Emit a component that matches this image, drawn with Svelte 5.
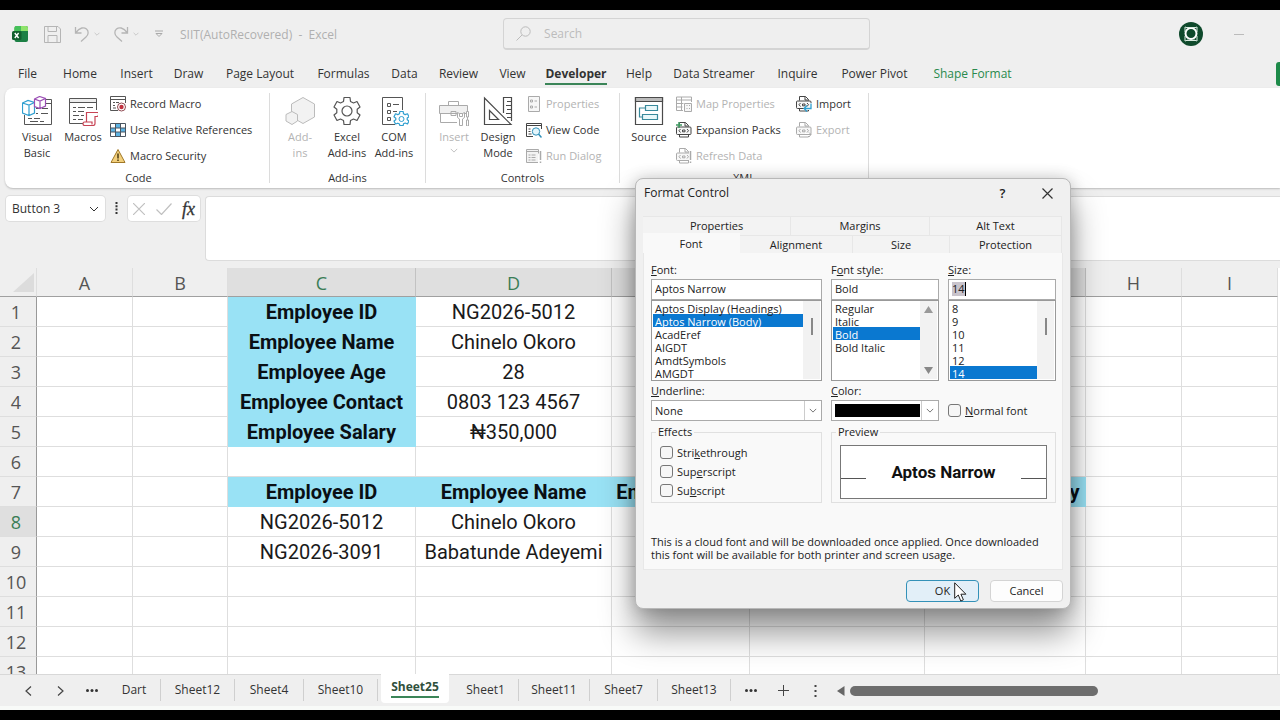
<script>
  const menus = ['File', 'Home', 'Insert', 'Draw', 'Page Layout', 'Formulas', 'Data', 'Review', 'View', 'Developer', 'Help', 'Data Streamer', 'Inquire', 'Power Pivot', 'Shape Format'];
  const columns = ['A', 'B', 'C', 'D', 'E', 'F', 'G', 'H', 'I'];
  const picked = ['C', 'D', 'E', 'F', 'G'];
  const cells = {
    C1: 'Employee ID', D1: 'NG2026-5012',
    C2: 'Employee Name', D2: 'Chinelo Okoro',
    C3: 'Employee Age', D3: '28',
    C4: 'Employee Contact', D4: '0803 123 4567',
    C5: 'Employee Salary', D5: '₦350,000',
    C7: 'Employee ID', D7: 'Employee Name', E7: 'Employee Age', F7: 'Employee Contact', G7: 'Employee Salary',
    C8: 'NG2026-5012', D8: 'Chinelo Okoro',
    C9: 'NG2026-3091', D9: 'Babatunde Adeyemi'
  };
  const rows = Array.from({ length: 13 }, (_, i) => i + 1);
  const sheets = ['Dart', 'Sheet12', 'Sheet4', 'Sheet10', 'Sheet25', 'Sheet1', 'Sheet11', 'Sheet7', 'Sheet13'];
  const fonts = ['Aptos Display (Headings)', 'Aptos Narrow (Body)', 'AcadEref', 'AIGDT', 'AmdtSymbols', 'AMGDT'];
  const styles = ['Regular', 'Italic', 'Bold', 'Bold Italic'];
  const sizes = ['8', '9', '10', '11', '12', '14'];
  let font = $state('Aptos Narrow (Body)');
  let style = $state('Bold');
  let size = $state('14');

  function isHead(col, row) {
    return (col === 'C' && row <= 5) || (row === 7 && picked.includes(col));
  }
</script>

{#snippet icon(name)}
  {#if name === 'vb'}
    <svg class="big" viewBox="0 0 30 30" fill="none" stroke="#555">
      <path d="M24 3.500H29.500V28.500H2.500V19M24 7.500H29M14 12.500h4m2 0h6M14 17.500h2m3 0h7M6 22.500h4m2 0h6M8 25.500h8m2 0h4" />
      <path stroke="#2f9fd0" stroke-width="1.200" fill="#fff" d="M.5 7 6 4.500 12.500 6.500V17L7 19.500.5 17ZM.5 7 7 9l5.500-2.500M7 9v10" />
      <path stroke="#9b4fb5" stroke-width="1.200" fill="#fff" d="m12.500 3 5-2.500 6 2V10l-5.500 2.500-5.500-2ZM12.500 3 18 5l5.500-2.500M18 5v7" />
    </svg>
  {:else if name === 'macros'}
    <svg class="big" viewBox="0 0 30 30" fill="none" stroke="#555">
      <path fill="#eee" d="M1.500 2.500h27v4h-27Z" /><path d="M28.500 6v8M1.500 6v21.500H15M5 11.500h3m2 0h7m2 0h6M5 15.500h3m2 0h6M5 19.500h6m2 0h3M5 23.500h3m2 0h5" />
      <path stroke="#c74354" fill="#fff" stroke-width="1.200" d="M18.500 16.500h11c2 0 1 4-.500 4H27v7c0 2-1 2-2 2h-8.500c-2 0-2-3.500 0-3.500h2ZM16.500 26H24v2.500" />
    </svg>
  {:else if name === 'addins'}
    <svg class="big" viewBox="0 0 30 30" fill="#f2f2f2" stroke="#bbb">
      <path d="M18 1.500 29.500 8v13L18 27.500 6.500 21V8Z" /><path d="m7 15.500 5.500 3V25L7 28.500 1 25v-6.500Z" />
    </svg>
  {:else if name === 'excel'}
    <svg class="big" viewBox="0 0 30 30" fill="none" stroke="#555" stroke-width="1.200" stroke-linejoin="round">
      <path d="m12 1.500-.5 4-3 1.500-3.500-1.500L2 11l2.800 2.300v3.400L2 19l3 5.500L8.500 23l3 1.500.5 4h6l.5-4 3-1.500 3.500 1.500 3-5.500-2.800-2.300v-3.400L28 11l-3-5.500L21.500 7l-3-1.500-.5-4Z" /><circle cx="15" cy="15" r="5" />
    </svg>
  {:else if name === 'com'}
    <svg class="big" viewBox="0 0 30 30" fill="none" stroke="#555">
      <path d="M16 28.500H3.500v-27h20V14M8.500 7.500h3v3h-3Zm0 7h3v3h-3Zm0 7h3v3h-3ZM14 8.500h6M14 15.500h4" />
      <path stroke="#2f9fd0" stroke-width="1.200" fill="#fff" stroke-linejoin="round" d="m20.800 15.500-.3 2.300-1.700.8-2.300-.8-1.500 3 1.800 1.400v1.600L15 25l1.500 3 2.300-.8 1.700.8.3 1.500h3.400l.3-1.700 1.700-.8 2.300 1 1.500-3-1.800-1.300v-1.600l1.800-1.300-1.500-3-2.300.8-1.700-.8-.3-2.300Z" /><circle cx="22.500" cy="23" r="2.500" stroke="#2f9fd0" />
    </svg>
  {:else if name === 'toolbox'}
    <svg class="big" viewBox="0 0 30 30" fill="none" stroke="#aaa">
      <path fill="#f0f0f0" d="M.5 9.500h28v8h-28Z" /><path d="M9.500 9V5.500h10V9M1.500 17v9.500H18M12 15.500h5v4h-5Z" />
      <path fill="#fff" d="M18.500 16.500v5l2 1.500v6.500h3V23l2-1.500v-5l-2 1v3h-3v-3ZM27.500 15.500h2V21h-2Zm1 5.500v3m-1 0h2v6h-2Z" />
    </svg>
  {:else if name === 'design'}
    <svg class="big" viewBox="0 0 30 30" fill="none" stroke="#4a4a4a" stroke-width="1.200">
      <path d="M1.500 2v26.500H28ZM6.500 14.500v9h9Z" /><path d="M20.500 17V1.500h8V25M28 5.500h-4M28 9.500h-5M28 13.500h-4M28 17.500h-5M28 21.500h-4" />
    </svg>
  {:else if name === 'source'}
    <svg class="big" viewBox="0 0 30 30" fill="none" stroke="#4a4a4a" stroke-width="1.200">
      <path d="M1.500 1.500h27v27h-27Z" /><path fill="#bbb" d="M1.500 1.500h27v4h-27Z" />
      <path stroke="#38899b" fill="#e8f8fa" d="M11.500 9.500h12v5h-12Zm-3 9h15v5h-15Z" /><path stroke="#38899b" d="M11 12H5.500v9h3" />
    </svg>
  {:else if name === 'record'}
    <svg class="small" viewBox="0 0 16 16" fill="none" stroke="#555">
      <path d="M8 14.500H.5V.5h15V7M.5 3.500h15M3 6.500h2m1 0h3M3 9.500h2M3 12h3" /><circle cx="11.500" cy="11" r="4" fill="#fff" stroke="#8f4a52" /><circle cx="11.500" cy="11" r="2.200" fill="#c0303f" stroke="none" />
    </svg>
  {:else if name === 'relative'}
    <svg class="small" viewBox="0 0 16 16" fill="none" stroke="#4a5560">
      <path fill="#5db4e4" stroke="none" d="M5.500 2h5v4h-5ZM1 6h4.500v4H1Zm9.500 0H15v4h-4.500ZM5.500 10h5v4h-5Z" /><path d="M.5 1.500h15v13H.5ZM.5 6h15m-15 4h15M5.500 1.500v13m5-13v13" />
    </svg>
  {:else if name === 'warn'}
    <svg class="small" viewBox="0 0 16 16"><path fill="#f2cf7c" stroke="#a07828" stroke-linejoin="round" d="M8 1.500 15 14.500H1Z" /><path stroke="#4a3a10" stroke-width="1.500" d="M8 5.500v5M8 11.500V13" /></svg>
  {:else if name === 'props'}
    <svg class="small" viewBox="0 0 16 16" fill="none" stroke="#aaa"><path fill="#f7f7f7" d="M2.500.5h11v15h-11Z" /><path d="M4.500 4h2v2h-2Zm0 6h2v2h-2ZM8.500 5H11m-2.500 6H11" /></svg>
  {:else if name === 'viewcode'}
    <svg class="small" viewBox="0 0 16 16" fill="none" stroke="#444"><path d="M7 14.500H.5v-13h15V7M.5 3.500h15M2.500 7h2m-2 2.500h2m-2 2.500h3" /><circle cx="10" cy="9.500" r="3.700" fill="#e3f5fb" stroke="#2f8fb8" /><path stroke="#2f8fb8" stroke-width="1.500" d="m12.500 12 3 3.500" /></svg>
  {:else if name === 'rundialog'}
    <svg class="small" viewBox="0 0 16 16" fill="none" stroke="#aaa"><path fill="#f3f3f3" d="M12 14.500H.5v-13h12v4M.5 3.500h12M2.500 7h2m1 0h4m-7 2.500h2m1 0h4m-7 2.500h2m1 0h4" /><path stroke-width="1.500" d="M14.500 3v9m0 1.500V15" /></svg>
  {:else if name === 'mapprops'}
    <svg class="small" viewBox="0 0 16 16" fill="none" stroke="#aaa"><path d="M7 14.500H.5V1h15v5M.5 4h15m-15 3.500h7m-7 3.500h6M5.500 1v13" /><path fill="#f7f7f7" d="M8.500 7.500h7v8h-7Zm2 2h1m1.500 0h1m-3.500 3h1m1.500 0h1" /></svg>
  {:else}
    <svg class="small" viewBox="0 0 16 16" fill="none" stroke={name === 'refresh' || name === 'export' ? '#aaa' : '#444'}>
      <path d="M3.500 4.500v-4h6l3 3v1M9 .5v3.500h3.500M3.500 12.500v2.500h9v-2.500" /><rect x=".5" y="5" width="14.500" height="7.500" rx="1" fill="#f7f7f7" />
      <path d="M4.500 7 3 8.700l1.500 1.800M11 7l1.500 1.700L11 10.500M6.500 8h2.500v1.800H6.500Z" />
      {#if name === 'expansion'}<path stroke="#3f9b62" stroke-width="1.500" d="M3 0v6M0 3h6" />{/if}
      {#if name === 'import'}<path stroke="#fff" stroke-width="3" d="M15.500 7v5.500H9" /><path stroke="#2f9fd0" stroke-width="1.300" d="M15 7.500v5H8.500m2.500-3-3 3 3 3" />{/if}
      {#if name === 'export'}<path stroke="#fff" stroke-width="3" d="M9 12.500h5" /><path d="M9 12.500h6m-2-2 2 2-2 2.500" />{/if}
      {#if name === 'refresh'}<path stroke="#fff" stroke-width="3" d="M14.500 2v12" /><path stroke-width="1.500" d="M14.500 3v9m0 1.500V15" />{/if}
    </svg>
  {/if}
{/snippet}

{#snippet big(name, a, b, off)}
  <button class="bigbtn" disabled={off}>{@render icon(name)}<span>{a}<br />{b}</span></button>
{/snippet}
{#snippet small(name, text, off)}
  <button class="smallbtn" disabled={off}>{@render icon(name)}<span>{text}</span></button>
{/snippet}
{#snippet chevron()}
  <svg class="chev" viewBox="0 0 10 6" fill="none" stroke="currentColor"><path d="m1 1 4 4 4-4" /></svg>
{/snippet}

<div class="app">
  <header class="title">
    <svg class="logo" viewBox="0 0 16 16"><rect x="2.500" width="13.500" height="16" rx="2" fill="#1c8045" /><path fill="#8fe36b" d="M4 0h10a2 2 0 0 1 2 2v3H2.500V2Z" /><path fill="#45c05a" d="M9 0H4a2 2 0 0 0-1.500 2v3H9Z" /><rect y="5" width="9.500" height="9" rx="1.500" fill="#12602f" /><path stroke="#fff" stroke-width="1.400" d="m2.800 7 3.800 5M6.600 7l-3.800 5" /></svg>
    <button class="qa" aria-label="Save"><svg width="17" height="17" viewBox="0 0 17 17" fill="none" stroke="#b5b5b5"><path d="M.5.5H14l2.500 2.500v13.500H.5ZM4 .5v5h8.500v-5M4 16V9.500h9V16" /></svg></button>
    <button class="qa undo" aria-label="Undo"><svg width="16" height="17" viewBox="0 0 16 17" fill="none" stroke="#b5b5b5" stroke-width="1.300"><path d="M1.500 1v6h6M1.500 7C6 1 10 1 12.500 3s2 6-.5 8l-5 4.500" /></svg>{@render chevron()}</button>
    <button class="qa redo" aria-label="Redo"><svg width="16" height="17" viewBox="0 0 16 17" fill="none" stroke="#b5b5b5" stroke-width="1.300"><path d="M14.500 1v6h-6M14.500 7C10 1 6 1 3.500 3s-2 6 .5 8l5 4.500" /></svg>{@render chevron()}</button>
    <button class="qa more" aria-label="Customize toolbar"><svg width="8" height="8" viewBox="0 0 8 8" fill="none" stroke="#aaa"><path d="M0 1h8M1 3.500l3 3 3-3Z" /></svg></button>
    <span class="doc">SIIT(AutoRecovered)&nbsp; - &nbsp;Excel</span>
    <label class="search">
      <svg width="15" height="15" viewBox="0 0 15 15" fill="none" stroke="#bbb"><circle cx="9.500" cy="5.500" r="4.700" /><path d="M6 9 .5 14.500" /></svg>
      <input type="search" placeholder="Search" aria-label="Search" />
    </label>
    <button class="avatar" aria-label="Account"><svg width="24" height="24" viewBox="0 0 24 24" fill="none"><circle cx="12" cy="12" r="12" fill="#0f4a2c" /><circle cx="12" cy="11.500" r="5.500" stroke="#fff" stroke-width="2" /><path stroke="#d8eadf" d="M6 10V5l3 1m6 0 3-1v5M6 14v5l3-1m6 0 3 1v-5M7 5.500h10M8 18.500h8" /></svg></button>
    <button class="min" aria-label="Minimize"></button>
  </header>

  <nav class="menus">
    {#each menus as m}
      <button class:active={m === 'Developer'} class:green={m === 'Shape Format'}><span>{m}</span></button>
    {/each}
    <button class="share" aria-label="Share"></button>
  </nav>

  <section class="ribbon">
    <div class="group code">
      <div class="tools">
        {@render big('vb', 'Visual', 'Basic', false)}
        {@render big('macros', 'Macros', '', false)}
        <div class="stack">{@render small('record', 'Record Macro', false)}{@render small('relative', 'Use Relative References', false)}{@render small('warn', 'Macro Security', false)}</div>
      </div>
      <h2>Code</h2>
    </div>
    <div class="group addins">
      <div class="tools">
        {@render big('addins', 'Add-', 'ins', true)}
        {@render big('excel', 'Excel', 'Add-ins', false)}
        {@render big('com', 'COM', 'Add-ins', false)}
      </div>
      <h2>Add-ins</h2>
    </div>
    <div class="group controls">
      <div class="tools">
        <button class="bigbtn" disabled>{@render icon('toolbox')}<span>Insert</span>{@render chevron()}</button>
        {@render big('design', 'Design', 'Mode', false)}
        <div class="stack">{@render small('props', 'Properties', true)}{@render small('viewcode', 'View Code', false)}{@render small('rundialog', 'Run Dialog', true)}</div>
      </div>
      <h2>Controls</h2>
    </div>
    <div class="group xml">
      <div class="tools">
        {@render big('source', 'Source', '', false)}
        <div class="stack wide">{@render small('mapprops', 'Map Properties', true)}{@render small('expansion', 'Expansion Packs', false)}{@render small('refresh', 'Refresh Data', true)}</div>
        <div class="stack">{@render small('import', 'Import', false)}{@render small('export', 'Export', true)}</div>
      </div>
      <h2>XML</h2>
    </div>
  </section>

  <section class="formula">
    <button class="namebox"><span>Button 3</span>{@render chevron()}</button>
    <svg class="dots" width="3" height="12" viewBox="0 0 3 12" fill="#333"><path d="M.5 0h2v2h-2Zm0 3.300h2v2h-2Zm0 3.300h2v2h-2Zm0 3.300h2v2h-2Z" /></svg>
    <div class="fx">
      <button aria-label="Cancel entry"><svg width="12" height="12" viewBox="0 0 12 12" stroke="#c0c0c0" stroke-width="1.200"><path d="m0 0 12 12M12 0 0 12" /></svg></button>
      <button aria-label="Enter"><svg width="16" height="12" viewBox="0 0 16 12" fill="none" stroke="#c0c0c0" stroke-width="1.200"><path d="m.5 6.500 5 5L15.500.5" /></svg></button>
      <button class="f">fx</button>
    </div>
    <textarea aria-label="Formula bar"></textarea>
  </section>

  <main class="sheet">
    <table>
      <colgroup><col class="w-n" /><col class="w-a" /><col class="w-b" /><col class="w-c" /><col class="w-d" /><col class="w-e" /><col class="w-f" /><col class="w-g" /><col class="w-a" /><col class="w-a" /></colgroup>
      <thead>
        <tr>
          <th class="corner"><svg width="22" height="20" viewBox="0 0 22 20"><path fill="#dcdcdc" d="M21 0v19H0Z" /></svg></th>
          {#each columns as c}<th class:picked={picked.includes(c)}>{c}</th>{/each}
        </tr>
      </thead>
      <tbody>
        {#each rows as r}
          <tr>
            <th class:current={r === 8}>{r}</th>
            {#each columns as c}<td class:head={isHead(c, r)}>{cells[c + r] ?? ''}</td>{/each}
          </tr>
        {/each}
      </tbody>
    </table>
  </main>

  <footer>
    <button class="arrow" aria-label="Previous sheet"><svg width="7" height="10" viewBox="0 0 7 10" fill="none" stroke="#444" stroke-width="1.200"><path d="M6 .5 1 5l5 4.500" /></svg></button>
    <button class="arrow" aria-label="Next sheet"><svg width="7" height="10" viewBox="0 0 7 10" fill="none" stroke="#444" stroke-width="1.200"><path d="m1 .5 5 4.500-5 4.500" /></svg></button>
    <button class="arrow" aria-label="More sheets before"><svg width="12" height="3" viewBox="0 0 12 3" fill="#333"><circle cx="1.500" cy="1.500" r="1.500" /><circle cx="6" cy="1.500" r="1.500" /><circle cx="10.500" cy="1.500" r="1.500" /></svg></button>
    <div class="tabs">
      {#each sheets as s}<button class:on={s === 'Sheet25'}><span>{s}</span></button>{/each}
    </div>
    <button class="arrow" aria-label="More sheets after"><svg width="12" height="3" viewBox="0 0 12 3" fill="#333"><circle cx="1.500" cy="1.500" r="1.500" /><circle cx="6" cy="1.500" r="1.500" /><circle cx="10.500" cy="1.500" r="1.500" /></svg></button>
    <button class="arrow" aria-label="New sheet"><svg width="11" height="11" viewBox="0 0 11 11" stroke="#444"><path d="M5.500 0v11M0 5.500h11" /></svg></button>
    <svg class="dots" width="3" height="12" viewBox="0 0 3 12" fill="#444"><path d="M.5 0h2v2h-2Zm0 5h2v2h-2Zm0 5h2v2h-2Z" /></svg>
    <div class="scroll"><svg width="8" height="10" viewBox="0 0 8 10"><path fill="#666" d="M7.500 0v10L0 5Z" /></svg><div class="thumb"></div></div>
  </footer>
  <div class="status"></div>

  <div class="dialog" role="dialog" aria-labelledby="dlg-title">
    <div class="bar">
      <h1 id="dlg-title">Format Control</h1>
      <button class="help">?</button>
      <button aria-label="Close"><svg width="11" height="11" viewBox="0 0 11 11" stroke="#333" stroke-width="1.200"><path d="m.5.5 10 10m0-10-10 10" /></svg></button>
    </div>
    <div class="trow one"><button>Properties</button><button>Margins</button><button>Alt Text</button></div>
    <div class="trow two"><button class="sel">Font</button><button>Alignment</button><button>Size</button><button>Protection</button></div>
    <div class="panel">
      <div class="fields">
        <div class="field">
          <label for="font"><u>F</u>ont:</label>
          <input id="font" type="text" value="Aptos Narrow" />
          <div class="list"><select size="6" aria-label="Font list" bind:value={font}>{#each fonts as f}<option>{f}</option>{/each}</select><div class="sb"><i></i></div></div>
        </div>
        <div class="field">
          <label for="style">F<u>o</u>nt style:</label>
          <input id="style" type="text" value="Bold" />
          <div class="list"><select size="6" aria-label="Style list" bind:value={style}>{#each styles as f}<option>{f}</option>{/each}</select>
            <div class="sb ends"><svg width="9" height="7" viewBox="0 0 9 7"><path fill="#999" d="M4.500 0 9 7H0Z" /></svg><svg width="9" height="7" viewBox="0 0 9 7"><path fill="#888" d="M4.500 7 9 0H0Z" /></svg></div></div>
        </div>
        <div class="field">
          <label for="size"><u>S</u>ize:</label>
          <div class="sizebox"><span>14</span></div>
          <div class="list"><select id="size" size="6" aria-label="Size list" bind:value={size}>{#each sizes as f}<option>{f}</option>{/each}</select><div class="sb"><i></i></div></div>
        </div>
        <div class="field">
          <label for="under"><u>U</u>nderline:</label>
          <div class="drop"><select id="under"><option>None</option></select><span class="dd">{@render chevron()}</span></div>
        </div>
        <div class="field">
          <label for="color"><u>C</u>olor:</label>
          <div class="drop swatch"><select id="color"><option value="#000000"></option></select><span class="dd">{@render chevron()}</span></div>
        </div>
        <label class="check normal"><input type="checkbox" /><span><u>N</u>ormal font</span></label>
        <fieldset class="effects">
          <legend>Effects</legend>
          <label class="check"><input type="checkbox" /><span>Stri<u>k</u>ethrough</span></label>
          <label class="check"><input type="checkbox" /><span>Sup<u>e</u>rscript</span></label>
          <label class="check"><input type="checkbox" /><span>Su<u>b</u>script</span></label>
        </fieldset>
        <fieldset class="preview">
          <legend>Preview</legend>
          <div class="sample"><i></i><b>Aptos Narrow</b><i></i></div>
        </fieldset>
      </div>
      <p>This is a cloud font and will be downloaded once applied. Once downloaded<br />this font will be available for both printer and screen usage.</p>
    </div>
    <div class="actions">
      <button class="ok">OK</button>
      <button>Cancel</button>
    </div>
    <svg class="pointer" width="13" height="20" viewBox="0 0 13 20"><path fill="#fff" stroke="#222" stroke-linejoin="round" d="M.7.800v15.500l3.600-3.300 2.500 6 2.600-1.200-2.500-5.600h5Z" /></svg>
  </div>
</div>

<style>
  :global(body) { margin: 0; background: #000; }
  .app, .app * { box-sizing: border-box; }
  .app { font-family: "Open Sans", "Noto Sans", sans-serif; font-size: 12px; color: #333; height: 100vh; padding: 10px 0; display: flex; flex-direction: column; position: relative; overflow: hidden; background: #000; }
  button, input, select, textarea { font: inherit; color: inherit; }
  button { border: 0; background: none; padding: 0; margin: 0; }
  svg { display: block; flex: none; }
  .chev { width: 8px; height: 5px; }

  .title { flex: none; height: 48px; background: #efefef; display: flex; align-items: center; padding-left: 12px; color: #b0b0b0; }
  .logo { width: 16px; height: 16px; margin-right: 16px; }
  .qa { display: flex; align-items: center; gap: 4px; }
  .qa .chev { width: 6px; height: 4px; }
  .undo, .redo { margin-left: 13px; }
  .more { margin-left: 16px; }
  .doc { margin-left: 17px; white-space: nowrap; }
  .search { width: 367px; height: 32px; border: 1px solid #d4d4d4; border-bottom-width: 2px; border-radius: 4px; display: flex; align-items: center; gap: 13px; padding: 0 12px; margin-left: 166px; }
  .search input { border: 0; background: none; outline: 0; padding: 0; flex: 1; font-size: 12px; }
  .search input::placeholder { color: #bcbcbc; opacity: 1; }
  .avatar { margin-left: auto; margin-right: 31px; }
  .min { width: 10px; height: 1px; background: #bbb; margin-right: 36px; }

  .menus { flex: none; height: 30px; background: #efefef; display: grid; grid-template-columns: 45px 60px 53px 51px 92px 75px 47px 61px 47px 80px 46px 104px 63px 91px 105px 1fr; padding: 4px 0 0 5px; }
  .menus button { white-space: nowrap; display: flex; justify-content: center; align-items: center; }
  .menus button span { line-height: 18px; border-bottom: 2px solid transparent; }
  .menus .active { font-weight: 700; }
  .menus .active span { border-color: #3b8558; }
  .menus .green { color: #2a8a4d; }
  .menus .share { width: 4px; height: 24px; justify-self: end; background: #1d8a49; border-radius: 3px 0 0 3px; }

  .ribbon { flex: none; height: 100px; margin-left: 5px; background: #fff; border-radius: 8px 0 0 8px; display: flex; font-size: 11px; box-shadow: 0 1px 2px #bbb; z-index: 1; }
  .app::before { content: ""; position: absolute; inset: 88px 0 auto 0; height: 200px; background: #efefef; z-index: 0; }
  .group { padding: 8px 0 2px; display: flex; flex-direction: column; justify-content: space-between; position: relative; }
  .group::after { content: ""; position: absolute; right: 0; top: 5px; bottom: 5px; width: 1px; background: #dcdcdc; }
  .code { width: 265px; padding-left: 9px; }
  .addins { width: 156px; padding-left: 6px; }
  .controls { width: 194px; padding-left: 6px; }
  .xml { width: 249px; padding-left: 6px; }
  .tools { display: flex; }
  h2 { margin: 0; padding-right: 7px; font-size: 11px; font-weight: 400; line-height: 16px; text-align: center; }
  .bigbtn { width: 46px; display: flex; flex-direction: column; align-items: center; line-height: 16px; gap: 3px; white-space: nowrap; }
  .addins .bigbtn { width: 48px; }
  .addins .bigbtn:nth-child(2) { width: 46px; }
  .controls .bigbtn { width: 44px; }
  .big { width: 30px; height: 30px; }
  button:disabled { color: #b3b3b3; }
  .stack { display: flex; flex-direction: column; gap: 8px; margin: -1px 0 0 4px; }
  .controls .stack { margin-left: 6px; }
  .wide { width: 116px; }
  .smallbtn { display: flex; align-items: center; gap: 4px; height: 18px; white-space: nowrap; line-height: 16px; padding-bottom: 1px; }
  .small { width: 16px; height: 16px; }

  .formula { flex: none; height: 80px; display: flex; align-items: flex-start; padding: 8px 0 0 6px; z-index: 0; }
  .namebox { width: 99px; height: 25px; background: #fff; border-radius: 4px; box-shadow: 0 0 0 1px #dedede; display: flex; justify-content: space-between; align-items: center; padding: 0 6px; }
  .namebox .chev { width: 10px; height: 6px; }
  .dots { margin: 6px 10px; }
  .fx { width: 72px; height: 25px; background: #fff; border-radius: 4px; box-shadow: 0 0 0 1px #dedede; display: flex; justify-content: space-between; align-items: center; padding: 0 5px; }
  .f { font: italic 18px/20px "Liberation Serif", serif; -webkit-text-stroke: 0.3px #333; }
  .formula textarea { flex: 1; height: 65px; margin-left: 5px; border: 1px solid #dcdcdc; border-right: 0; border-radius: 4px 0 0 4px; background: #fff; resize: none; }

  .sheet { flex: 1 1 0; min-height: 0; overflow: hidden; background: #fff; z-index: 0; }
  table { border-collapse: separate; border-spacing: 0; table-layout: fixed; width: 1278px; }
  .w-n { width: 37px; } .w-a { width: 96px; } .w-b { width: 95px; } .w-c { width: 188px; } .w-d { width: 196px; } .w-e { width: 138px; } .w-f { width: 175px; } .w-g { width: 161px; }
  th, td { padding: 2px 0 0; height: 30px; line-height: 27px; white-space: nowrap; text-align: center; border: 0 solid #dedede; border-width: 0 1px 1px 0; }
  td { font-family: Roboto, sans-serif; font-size: 20px; color: #1a1a1a; overflow: hidden; }
  th { font-size: 18px; font-weight: 400; color: #555; background: #efefef; }
  thead th { height: 29px; line-height: 26px; border-bottom-color: #a0a0a0; }
  thead .corner svg { margin-left: 13px; }
  tbody th { border-right-color: #999; padding-right: 4px; }
  .picked { background: #dfdfdf; color: #3a7d56; border-right-color: #c2c2c2; }
  .current { background: #dfdfdf; color: #3a7d56; }
  .head { background: #99e2f5; border-color: #99e2f5; font-weight: 700; color: #0a0f14; }

  footer { flex: none; height: 32px; background: #efefef; border-top: 1px solid #d8d8d8; display: flex; align-items: center; padding-left: 12px; z-index: 0; }
  .arrow { width: 32px; height: 30px; display: flex; align-items: center; justify-content: center; }
  .tabs { display: grid; grid-template-columns: 53px 74px 69px 74px 75px 66px 71px 68px 73px; margin-right: 4px; }
  .tabs button { height: 22px; border-right: 1px solid #cfcfcf; display: flex; align-items: center; justify-content: center; }
  .tabs .on { font-weight: 700; background: #fff; height: 29px; margin: -5px 4px 0 3px; border: 0; border-radius: 0 0 4px 4px; color: #30503c; }
  .tabs .on span { border-bottom: 2px solid #3b8558; line-height: 18px; }
  footer .dots { margin: 0 20px 0 15px; }
  .scroll { flex: 1; display: flex; align-items: center; gap: 5px; }
  .thumb { width: 248px; height: 10px; border-radius: 5px; background: #6d6d6d; }
  .status { flex: none; height: 4px; background: #f8faf8; z-index: 0; }

  .dialog { position: absolute; left: 635px; top: 178px; width: 436px; height: 431px; border-radius: 8px; border: 1px solid #b8b8b8; background: #f0f0f0; box-shadow: 0 24px 34px rgba(0, 0, 0, .42), 0 0 16px rgba(0, 0, 0, .2); z-index: 5; padding: 0 7px 6px 7px; font-size: 11px; line-height: 13px; color: #222; display: flex; flex-direction: column; }
  .bar { height: 37px; display: flex; align-items: flex-start; padding-left: 1px; }
  .bar h1 { flex: 1; margin: 0; font-size: 12px; font-weight: 400; line-height: 28px; }
  .bar button { width: 45px; height: 28px; display: flex; align-items: center; justify-content: center; }
  .bar .help { font-size: 13px; font-weight: 600; }
  .bar button:last-child { margin-right: -7px; }
  .trow { display: grid; height: 19px; margin-right: 1px; }
  .one { grid-template-columns: 148px 139px 1fr; }
  .two { grid-template-columns: 97px 113px 97px 1fr; height: 18px; }
  .trow button { background: #f3f3f3; border: 1px solid #e7e7e7; border-width: 1px 1px 0 0; padding-bottom: 1px; }
  .trow .sel { background: #f9f9f9; margin-top: -2px; border-color: #f9f9f9; }
  .panel { flex: 1; background: #f9f9f9; border: 1px solid #e8e8e8; border-top: 0; padding: 10px 6px 0 7px; }
  .fields { display: grid; grid-template-columns: 171px 108px 108px; column-gap: 9px; }
  .field { display: flex; flex-direction: column; }
  .field > label { height: 16px; }
  .field > input, .sizebox { height: 21px; border: 1px solid #aaa; background: #fff; padding: 0 3px 2px; outline: 0; border-radius: 0; width: 100%; }
  .sizebox { display: flex; align-items: center; }
  .sizebox span { background: #c9c4cc; border-right: 1px solid #000; line-height: 14px; }
  .list { height: 81px; border: 1px solid #999; background: #fff; display: flex; padding: 0 1px 1px; }
  .list select { flex: 1; min-width: 0; height: 78px; border: 0; outline: 0; overflow: hidden; background: #fff; padding: 0; border-radius: 0; }
  .list option { padding: 0 2px 2px; height: 13px; min-height: 13px; line-height: 11px; }
  .list option:checked { background: linear-gradient(#0a78d0, #0a78d0); -webkit-text-fill-color: #fff; }
  .sb { width: 17px; background: #f2f2f2; display: flex; justify-content: center; }
  .sb i { width: 2px; height: 17px; margin-top: 17px; background: #888; }
  .ends { flex-direction: column; justify-content: space-between; align-items: center; padding: 5px 0; }
  .field:nth-child(4), .field:nth-child(5) { margin-top: 3px; }
  .drop { height: 21px; border: 1px solid #aaa; background: #fff; display: grid; }
  .drop select { grid-area: 1 / 1; appearance: none; border: 0; background: #fff; padding: 0 3px; outline: 0; border-radius: 0; }
  .swatch select { background: #000; margin: 3px 18px 3px 3px; }
  .dd { grid-area: 1 / 1; justify-self: end; width: 17px; border-left: 1px solid #ccc; display: flex; align-items: center; justify-content: center; pointer-events: none; color: #555; }
  .check { display: flex; align-items: center; gap: 4px; height: 19px; line-height: 13px; }
  .check span { padding-bottom: 1px; }
  .check input { appearance: none; width: 13px; height: 13px; margin: 0; border: 1px solid #777; border-radius: 3px; background: #f6f6f6; }
  .normal { align-self: end; height: 21px; }
  fieldset { margin: 4px 0 0; border: 1px solid #e0e0e0; padding: 0 8px; min-width: 0; height: 78px; }
  legend { padding: 0 2px; margin-left: -4px; line-height: 14px; }
  .effects { padding-top: 4px; }
  .preview { grid-column: 2 / 4; }
  .sample { height: 54px; margin-top: 6px; background: #fff; border: 1px solid #777; display: flex; align-items: center; justify-content: space-between; }
  .sample i { width: 25px; height: 1px; background: #555; margin-top: 13px; }
  .sample b { font: 700 17px/20px Roboto, sans-serif; color: #111; }
  p { margin: 32px 0 0; white-space: nowrap; }
  .actions { display: flex; justify-content: flex-end; gap: 11px; padding-top: 10px; }
  .actions button { width: 73px; height: 22px; background: #fdfdfd; border: 1px solid #d4d4d4; border-radius: 4px; padding-bottom: 2px; }
  .actions .ok { background: #e2eff8; border-color: #3391b8; }
  .pointer { position: absolute; left: 318px; top: 403px; }
</style>
